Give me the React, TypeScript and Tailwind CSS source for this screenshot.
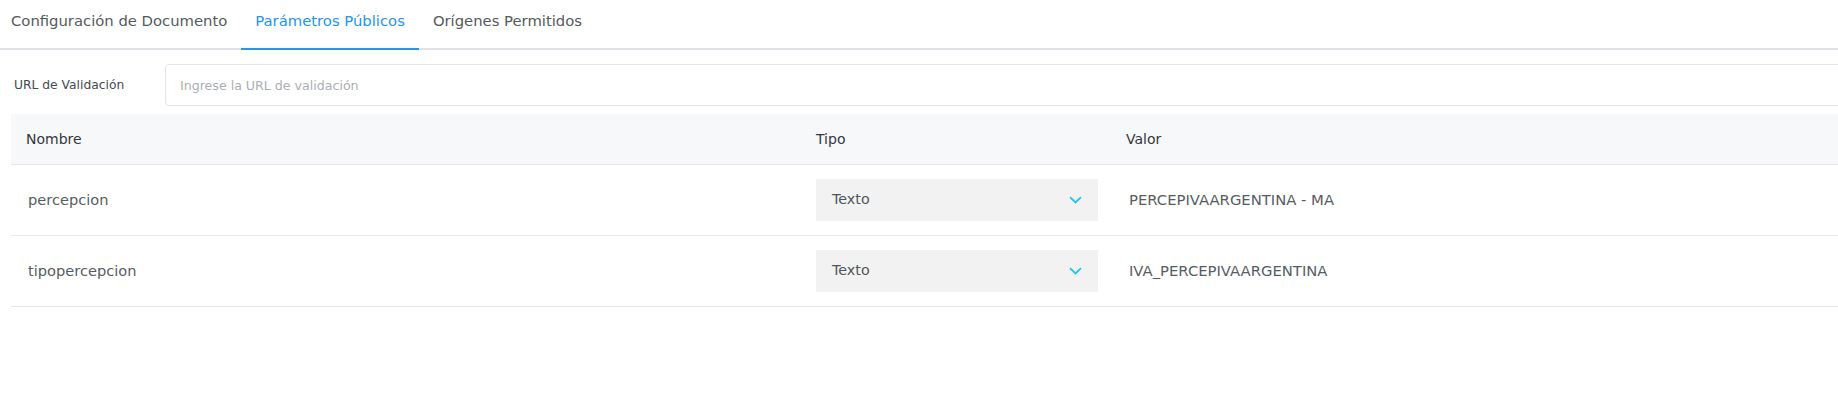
import { useState } from 'react';

type Param = {
  nombre: string;
  tipo: string;
  valor: string;
};

const params: Param[] = [
  { nombre: 'percepcion', tipo: 'Texto', valor: 'PERCEPIVAARGENTINA - MA' },
  { nombre: 'tipopercepcion', tipo: 'Texto', valor: 'IVA_PERCEPIVAARGENTINA' },
];

const tabs = ['Configuración de Documento', 'Parámetros Públicos', 'Orígenes Permitidos'];

const Chevron = () => (
  <svg width="13" height="8" viewBox="0 0 13 8" fill="none">
    <path d="M1 1.2 L6.5 6.5 L12 1.2" stroke="#22c3f7" strokeWidth="1.8" />
  </svg>
);

const App = () => {
  const [active, setActive] = useState(1);

  return (
    <div className="w-[1838px] h-[397px] overflow-hidden bg-white font-['DejaVu_Sans',sans-serif]">
      <div className="flex h-[50px] border-b-2 border-[#dfe2e6]">
        {tabs.map((tab, index) => (
          <button
            key={tab}
            onClick={() => setActive(index)}
            className={`-mb-[2px] h-[50px] text-[14.8px] border-b-2 ${
              index === 0 ? 'pl-[11px] pr-[14px]' : 'px-[14px]'
            } ${
              active === index
                ? 'border-[#2196f3] text-[#2196f3]'
                : 'border-transparent text-[#555a60]'
            }`}
          >
            <span className="relative top-[-3px]">{tab}</span>
          </button>
        ))}
      </div>

      <div className="flex items-center mt-[14px] h-[42px]">
        <label className="w-[165px] shrink-0 pl-[14px] text-[12.3px] text-[#454a50]">URL de Validación</label>
        <input
          className="w-[1700px] shrink-0 h-[42px] border border-[#e2e5e9] rounded-[4px] pl-[14px] text-[12.6px] text-[#444] outline-none placeholder:text-[#a9aeb4]"
          placeholder="Ingrese la URL de validación"
        />
      </div>

      <div className="ml-[11px] mt-[8px]">
        <div className="flex h-[51px] items-center bg-[#f7f8fa] border-b border-[#e4e6e9] text-[14px] font-medium text-[#33373c]">
          <div className="w-[790px] pl-[15px]">Nombre</div>
          <div className="w-[310px] pl-[15px]">Tipo</div>
          <div className="flex-1 pl-[15px]">Valor</div>
        </div>
        {params.map((p) => (
          <div key={p.nombre} className="flex h-[71px] items-center border-b border-[#e6e8ea]">
            <div className="w-[790px] pl-[17px] text-[14.6px] text-[#575c62]">{p.nombre}</div>
            <div className="w-[310px] pl-[15px]">
              <div className="flex h-[42px] w-[282px] items-center justify-between bg-[#f2f2f2] pl-[16px] pr-[16px] text-[14.3px] text-[#50555b]">
                <span>{p.tipo}</span>
                <Chevron />
              </div>
            </div>
            <div className="flex-1 pl-[18px] text-[14.8px] text-[#575c62]">{p.valor}</div>
          </div>
        ))}
      </div>
    </div>
  );
};

export default App;
